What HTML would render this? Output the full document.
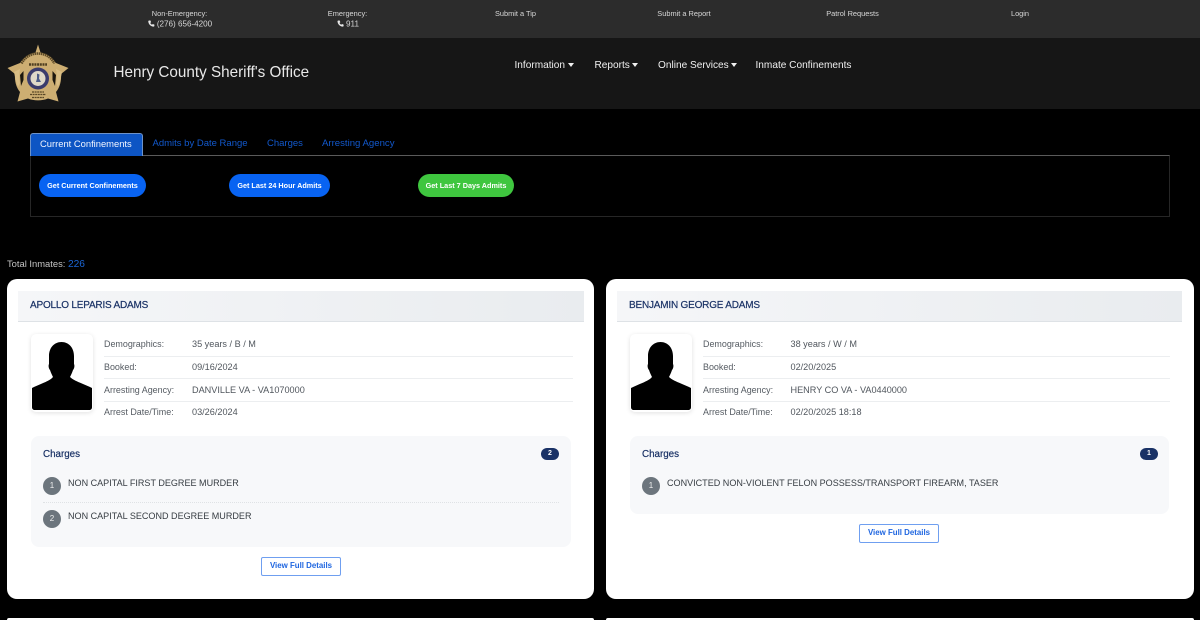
<!DOCTYPE html>
<html lang="en">
<head>
<meta charset="utf-8">
<title>Henry County Sheriff's Office</title>
<style>
*{box-sizing:border-box}
html,body{margin:0;padding:0;width:1200px;height:620px;overflow:hidden;background:#000}
body{position:relative;font-family:"Liberation Sans",sans-serif;color:#333}
#w{position:absolute;left:0;top:0;width:1200px;height:620px;overflow:hidden;filter:blur(.3px)}
.a{position:absolute;white-space:nowrap;line-height:1}
.c{transform:translateX(-50%)}
.box{position:absolute}
.top{font-size:7.4px;color:#d8d8d8}
.ph1{font-size:8.100px;color:#d8d8d8}
.nav{font-size:10.100px;color:#f0f0f0;top:61px}
.caret{display:inline-block;width:0;height:0;border-left:3.500px solid transparent;border-right:3.500px solid transparent;border-top:4px solid #f0f0f0;margin-left:2.500px;vertical-align:1.500px}
.tab{font-size:9.500px;color:#1258cc;top:139px}
.btn{position:absolute;border-radius:12px;color:#fff;font-size:7.250px;font-weight:bold;text-align:center;line-height:23px;height:23px}
.card{position:absolute;background:#fff;border-radius:10px}
.hd{position:absolute;height:31px;background:linear-gradient(90deg,#f5f6f8,#e9ecef);border-bottom:1px solid #dee2e6}
.name{font-size:10px;color:#1a3266;letter-spacing:-.2px;-webkit-text-stroke:.2px #1a3266}
.ph{position:absolute;width:62px;height:78px;background:#fff;border-radius:5px;box-shadow:0 1px 5px rgba(0,0,0,.12)}
.lb{font-size:8.950px;color:#555b62}
.vl{font-size:9.150px;color:#50565d}
.ln{position:absolute;height:1px;background:#eceef0}
.ch{position:absolute;background:#f7f8fa;border-radius:8px}
.cht{font-size:9.800px;color:#1a3266;-webkit-text-stroke:.2px #1a3266}
.bd{position:absolute;height:12px;width:18px;border-radius:7px;background:#1a3266;color:#fff;font-size:7px;font-weight:bold;text-align:center;line-height:12px}
.num{position:absolute;width:18px;height:18px;border-radius:50%;background:#6c757d;color:#eee;font-size:8px;text-align:center;line-height:17px}
.tx{font-size:9.050px;color:#363c42}
.dt{position:absolute;height:0;border-top:1px dotted #dfe2e5}
.vb{position:absolute;width:80px;height:19px;border:1px solid #6f9ff0;border-radius:2px;background:#fff;color:#1f66e0;font-size:7.900px;font-weight:bold;text-align:center;line-height:16px}
</style>
</head>
<body>
<div id="w">
<!-- top bar -->
<div class="box" style="left:0;top:0;width:1200px;height:38px;background:#2c2c2c"></div>
<span class="a c top" style="left:179.500px;top:10px">Non-Emergency:</span>
<span class="a c ph1" style="left:180px;top:19.500px"><svg width="7" height="7" viewBox="0 0 16 16" style="vertical-align:-0.500px;margin-right:2px"><path fill="#e8e8e8" d="M3 1l3 0 1.500 4-2 1.500c.8 2 2.200 3.400 4.200 4.300L11.300 9l3.700 1.500 0 3c0 1-1 1.700-2 1.500C6.500 14.500 1.500 9.500 1 3c0-1 1-2 2-2z"/></svg>(276) 656-4200</span>
<span class="a c top" style="left:347.500px;top:10px">Emergency:</span>
<span class="a c ph1" style="left:348px;top:19.500px"><svg width="7" height="7" viewBox="0 0 16 16" style="vertical-align:-0.500px;margin-right:2px"><path fill="#e8e8e8" d="M3 1l3 0 1.500 4-2 1.500c.8 2 2.200 3.400 4.200 4.300L11.300 9l3.700 1.500 0 3c0 1-1 1.700-2 1.500C6.500 14.500 1.500 9.500 1 3c0-1 1-2 2-2z"/></svg>911</span>
<span class="a c top" style="left:515.500px;top:10px">Submit a Tip</span>
<span class="a c top" style="left:684px;top:10px">Submit a Report</span>
<span class="a c top" style="left:852.500px;top:10px">Patrol Requests</span>
<span class="a c top" style="left:1020px;top:10px">Login</span>

<!-- header -->
<div class="box" style="left:0;top:38px;width:1200px;height:70.500px;background:#161616"></div>
<svg class="box" style="left:6px;top:43px" width="64" height="61" viewBox="0 0 64 61">
  <path d="M32 1.500L34.500 9.500C40 10.500 46 14 50 20L62.500 25L55 31C55.500 38 54 44 50 49L52.500 58.500L42 55.500C36 58 28 58 22 55.500L11.500 58.500L14 49C10 44 8.500 38 9 31L1.500 25L14 20C18 14 24 10.500 29.500 9.500Z" fill="#cdae72"/>
  <path d="M8 29L14 26C13 31 13 36 14 40L12 44C10 39 9 34 8 29ZM56 29L50 26C51 31 51 36 50 40L52 44C54 39 55 34 56 29Z" fill="#d9bd84"/>
  <path d="M14 32L17.500 28L17.500 37L15 43Z M50 32L46.500 28L46.500 37L49 43Z" fill="#1c170e"/>
  <path d="M15.500 20.500C19 14 25 10.500 32 10.500S45 14 48.500 20.500" fill="none" stroke="#5d4a27" stroke-width="2.600" stroke-dasharray="1.500 .6"/>
  <path d="M23 21.500H41" fill="none" stroke="#4e3e20" stroke-width="2.400" stroke-dasharray="2 .7"/>
  <circle cx="32" cy="35.500" r="11" fill="#3b3c6c"/>
  <circle cx="32" cy="35.500" r="7.500" fill="#dfd9c8"/>
  <path d="M31 30.500l2.500 1-.5 4 2 3.500h-5l1-3.500z" fill="#4c5c88"/>
  <path d="M26 49H38M24 51.500H40M26 54.500H38" stroke="#5a4826" stroke-width="1.200" stroke-dasharray="2 .6"/>
</svg>
<span class="a" style="left:113.500px;top:65px;font-size:15.250px;color:#e8e8e8">Henry County Sheriff's Office</span>
<span class="a nav" style="left:514.500px">Information<i class="caret"></i></span>
<span class="a nav" style="left:594.500px">Reports<i class="caret"></i></span>
<span class="a nav" style="left:658px">Online Services<i class="caret"></i></span>
<span class="a nav" style="left:755.500px">Inmate Confinements</span>

<!-- tabs -->
<div class="box" style="left:30px;top:155px;width:1140px;height:62px;border:1px solid #262626;border-top:1px solid #5a5a5a"></div>
<div class="box" style="left:30px;top:132.500px;width:113px;height:23px;background:#0d55c4;border:1px solid #6d93c9;border-bottom:none;border-radius:3px 3px 0 0"></div>
<span class="a" style="left:40px;top:139px;font-size:9.400px;color:#f2f6ff">Current Confinements</span>
<span class="a tab" style="left:152.500px">Admits by Date Range</span>
<span class="a tab" style="left:267px">Charges</span>
<span class="a tab" style="left:322px;font-size:9.600px">Arresting Agency</span>
<div class="btn" style="left:39px;top:174px;width:107px;background:#0863f2">Get Current Confinements</div>
<div class="btn" style="left:229px;top:174px;width:101px;background:#0863f2">Get Last 24 Hour Admits</div>
<div class="btn" style="left:418px;top:174px;width:96px;background:#3fc63f">Get Last 7 Days Admits</div>
<span class="a" style="left:7px;top:259px;font-size:9.400px;color:#c4c4c4">Total Inmates: <span style="color:#1b66d6;font-size:10.200px">226</span></span>

<!-- card 1 -->
<div class="card" style="left:7px;top:279px;width:587px;height:320px"></div>
<div class="hd" style="left:18px;top:291px;width:566px"></div>
<span class="a name" style="left:30px;top:300.500px">APOLLO LEPARIS ADAMS</span>
<div class="ph" style="left:31px;top:334px"></div>
<svg class="box" style="left:32px;top:342px" width="60" height="69" viewBox="0 0 60 69"><path d="M29.500 0C37 0 42 6 42 14V22C43 24 42 27 41 28C40 31 39 33 38 35C42 39 52 42 60 46V65C60 67 59 68 57 68H3C1 68 0 67 0 65V46C8 42 18 39 21 35C20 33 19 31 18 28C17 27 16 24 17 22V14C17 6 22 0 29.500 0Z" fill="#000"/></svg>
<span class="a lb" style="left:104px;top:340px">Demographics:</span><span class="a vl" style="left:192px;top:340px">35 years / B / M</span>
<div class="ln" style="left:104px;top:356px;width:469px"></div>
<span class="a lb" style="left:104px;top:363px">Booked:</span><span class="a vl" style="left:192px;top:363px">09/16/2024</span>
<div class="ln" style="left:104px;top:378px;width:469px"></div>
<span class="a lb" style="left:104px;top:385.500px">Arresting Agency:</span><span class="a vl" style="left:192px;top:385.500px">DANVILLE VA - VA1070000</span>
<div class="ln" style="left:104px;top:401px;width:469px"></div>
<span class="a lb" style="left:104px;top:408px">Arrest Date/Time:</span><span class="a vl" style="left:192px;top:408px">03/26/2024</span>
<div class="ch" style="left:31px;top:436px;width:540px;height:111px"></div>
<span class="a cht" style="left:43px;top:449.500px">Charges</span>
<div class="bd" style="left:541px;top:448px">2</div>
<div class="num" style="left:43px;top:477px">1</div>
<span class="a tx" style="left:68px;top:478.500px">NON CAPITAL FIRST DEGREE MURDER</span>
<div class="dt" style="left:43px;top:502px;width:516px"></div>
<div class="num" style="left:43px;top:510px">2</div>
<span class="a tx" style="left:68px;top:511.500px">NON CAPITAL SECOND DEGREE MURDER</span>
<div class="vb" style="left:261px;top:557px">View Full Details</div>

<!-- card 2 -->
<div class="card" style="left:606px;top:279px;width:588px;height:320px"></div>
<div class="hd" style="left:617px;top:291px;width:565px"></div>
<span class="a name" style="left:629px;top:300.500px">BENJAMIN GEORGE ADAMS</span>
<div class="ph" style="left:630px;top:334px"></div>
<svg class="box" style="left:631px;top:342px" width="60" height="69" viewBox="0 0 60 69"><path d="M29.500 0C37 0 42 6 42 14V22C43 24 42 27 41 28C40 31 39 33 38 35C42 39 52 42 60 46V65C60 67 59 68 57 68H3C1 68 0 67 0 65V46C8 42 18 39 21 35C20 33 19 31 18 28C17 27 16 24 17 22V14C17 6 22 0 29.500 0Z" fill="#000"/></svg>
<span class="a lb" style="left:703px;top:340px">Demographics:</span><span class="a vl" style="left:790.500px;top:340px">38 years / W / M</span>
<div class="ln" style="left:703px;top:356px;width:467px"></div>
<span class="a lb" style="left:703px;top:363px">Booked:</span><span class="a vl" style="left:790.500px;top:363px">02/20/2025</span>
<div class="ln" style="left:703px;top:378px;width:467px"></div>
<span class="a lb" style="left:703px;top:385.500px">Arresting Agency:</span><span class="a vl" style="left:790.500px;top:385.500px">HENRY CO VA - VA0440000</span>
<div class="ln" style="left:703px;top:401px;width:467px"></div>
<span class="a lb" style="left:703px;top:408px">Arrest Date/Time:</span><span class="a vl" style="left:790.500px;top:408px">02/20/2025 18:18</span>
<div class="ch" style="left:630px;top:436px;width:539px;height:78px"></div>
<span class="a cht" style="left:642px;top:449.500px">Charges</span>
<div class="bd" style="left:1140px;top:448px">1</div>
<div class="num" style="left:642px;top:477px">1</div>
<span class="a tx" style="left:667px;top:478.500px">CONVICTED NON-VIOLENT FELON POSSESS/TRANSPORT FIREARM, TASER</span>
<div class="vb" style="left:859px;top:524px">View Full Details</div>

<!-- next row -->
<div class="box" style="left:7px;top:618px;width:587px;height:2px;background:#fff;border-radius:3px 3px 0 0"></div>
<div class="box" style="left:606px;top:618px;width:588px;height:2px;background:#fff;border-radius:3px 3px 0 0"></div>
</div>
</body>
</html>
